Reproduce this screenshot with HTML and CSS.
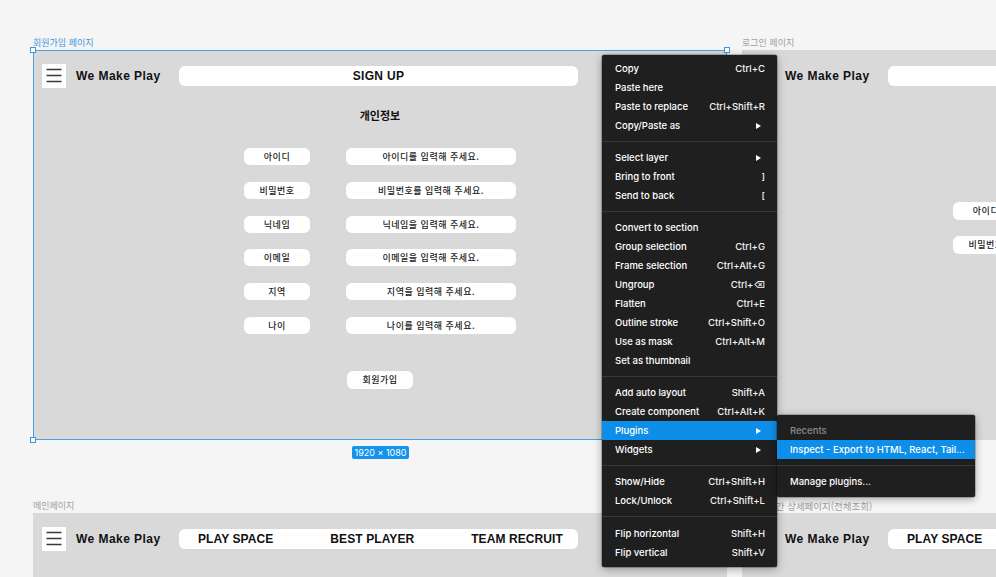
FILE: index.html
```html
<!DOCTYPE html>
<html lang="ko">
<head>
<meta charset="utf-8">
<title>Figma canvas</title>
<link rel="stylesheet" href="styles.css">
</head>
<body>
<div class="canvas">

  <!-- Frame 1: 회원가입 페이지 (selected) -->
  <div class="frame-label label-selected pos-signup-label">회원가입 페이지</div>
  <section class="frame pos-signup">
    <header class="frame-header">
      <span class="hamburger"><svg width="24" height="24" viewBox="0 0 24 24"><path d="M4.5 5.5H19.5M4.5 11.5H19.5M4.5 17.5H19.5" stroke="#3a3a3a" stroke-width="1.5" fill="none"/></svg></span>
      <span class="logo">We Make Play</span>
      <div class="nav-bar nav-center">SIGN UP</div>
    </header>
    <h2 class="form-title">개인정보</h2>
    <div class="form-grid">
      <div class="pill">아이디</div><div class="pill">아이디를 입력해 주세요.</div>
      <div class="pill">비밀번호</div><div class="pill">비밀번호를 입력해 주세요.</div>
      <div class="pill">닉네임</div><div class="pill">닉네임을 입력해 주세요.</div>
      <div class="pill">이메일</div><div class="pill">이메일을 입력해 주세요.</div>
      <div class="pill">지역</div><div class="pill">지역을 입력해 주세요.</div>
      <div class="pill">나이</div><div class="pill">나이를 입력해 주세요.</div>
    </div>
    <div class="pill submit-pill">회원가입</div>
    <div class="selection-box">
      <span class="handle h-tl"></span>
      <span class="handle h-tr"></span>
      <span class="handle h-bl"></span>
      <span class="handle h-br"></span>
    </div>
  </section>
  <div class="size-badge">1920 × 1080</div>

  <!-- Frame 2: 로그인 페이지 -->
  <div class="frame-label pos-login-label">로그인 페이지</div>
  <section class="frame pos-login">
    <header class="frame-header">
      <span class="hamburger"><svg width="24" height="24" viewBox="0 0 24 24"><path d="M4.5 5.5H19.5M4.5 11.5H19.5M4.5 17.5H19.5" stroke="#3a3a3a" stroke-width="1.5" fill="none"/></svg></span>
      <span class="logo">We Make Play</span>
      <div class="nav-bar nav-center">LOGIN</div>
    </header>
    <div class="login-grid">
      <div class="pill">아이디</div><div class="pill">아이디를 입력해 주세요.</div>
      <div class="pill">비밀번호</div><div class="pill">비밀번호를 입력해 주세요.</div>
    </div>
  </section>

  <!-- Frame 3: 메인페이지 -->
  <div class="frame-label pos-main-label">메인페이지</div>
  <section class="frame pos-main">
    <header class="frame-header">
      <span class="hamburger"><svg width="24" height="24" viewBox="0 0 24 24"><path d="M4.5 5.5H19.5M4.5 11.5H19.5M4.5 17.5H19.5" stroke="#3a3a3a" stroke-width="1.5" fill="none"/></svg></span>
      <span class="logo">We Make Play</span>
      <nav class="nav-bar nav-spread">
        <span>PLAY SPACE</span>
        <span>BEST PLAYER</span>
        <span>TEAM RECRUIT</span>
      </nav>
    </header>
  </section>

  <!-- Frame 4: 상세페이지 -->
  <div class="frame-label pos-detail-label">기간 상세페이지(전체조회)</div>
  <section class="frame pos-detail">
    <header class="frame-header">
      <span class="hamburger"><svg width="24" height="24" viewBox="0 0 24 24"><path d="M4.5 5.5H19.5M4.5 11.5H19.5M4.5 17.5H19.5" stroke="#3a3a3a" stroke-width="1.5" fill="none"/></svg></span>
      <span class="logo">We Make Play</span>
      <nav class="nav-bar nav-spread">
        <span>PLAY SPACE</span>
        <span>BEST PLAYER</span>
        <span>TEAM RECRUIT</span>
      </nav>
    </header>
  </section>

  <!-- Context menu -->
  <div class="ctx-menu">
    <div class="mi"><span>Copy</span><span class="sc">Ctrl+C</span></div>
    <div class="mi"><span>Paste here</span></div>
    <div class="mi"><span>Paste to replace</span><span class="sc">Ctrl+Shift+R</span></div>
    <div class="mi"><span>Copy/Paste as</span><span class="arrow"></span></div>
    <div class="sep"></div>
    <div class="mi"><span>Select layer</span><span class="arrow"></span></div>
    <div class="mi"><span>Bring to front</span><span class="sc">]</span></div>
    <div class="mi"><span>Send to back</span><span class="sc">[</span></div>
    <div class="sep"></div>
    <div class="mi"><span>Convert to section</span></div>
    <div class="mi"><span>Group selection</span><span class="sc">Ctrl+G</span></div>
    <div class="mi"><span>Frame selection</span><span class="sc">Ctrl+Alt+G</span></div>
    <div class="mi"><span>Ungroup</span><span class="sc">Ctrl+⌫</span></div>
    <div class="mi"><span>Flatten</span><span class="sc">Ctrl+E</span></div>
    <div class="mi"><span>Outline stroke</span><span class="sc">Ctrl+Shift+O</span></div>
    <div class="mi"><span>Use as mask</span><span class="sc">Ctrl+Alt+M</span></div>
    <div class="mi"><span>Set as thumbnail</span></div>
    <div class="sep"></div>
    <div class="mi"><span>Add auto layout</span><span class="sc">Shift+A</span></div>
    <div class="mi"><span>Create component</span><span class="sc">Ctrl+Alt+K</span></div>
    <div class="mi mi-active"><span>Plugins</span><span class="arrow"></span></div>
    <div class="mi"><span>Widgets</span><span class="arrow"></span></div>
    <div class="sep"></div>
    <div class="mi"><span>Show/Hide</span><span class="sc">Ctrl+Shift+H</span></div>
    <div class="mi"><span>Lock/Unlock</span><span class="sc">Ctrl+Shift+L</span></div>
    <div class="sep sep-wide"></div>
    <div class="mi"><span>Flip horizontal</span><span class="sc">Shift+H</span></div>
    <div class="mi"><span>Flip vertical</span><span class="sc">Shift+V</span></div>
  </div>

  <!-- Plugins submenu -->
  <div class="ctx-menu sub-menu">
    <div class="mi mi-muted"><span>Recents</span></div>
    <div class="mi mi-active"><span>Inspect - Export to HTML, React, Tail...</span></div>
    <div class="sep"></div>
    <div class="mi"><span>Manage plugins...</span></div>
  </div>

</div>
</body>
</html>
```

FILE: styles.css
```css
* { box-sizing: border-box; margin: 0; padding: 0; }

html, body {
  width: 996px;
  height: 577px;
  overflow: hidden;
  background: #f5f5f5;
}

.canvas {
  position: relative;
  width: 996px;
  height: 577px;
  overflow: hidden;
  background: #f5f5f5;
  font-family: "Liberation Sans", Arial, sans-serif;
}

/* ---------- frame labels on the canvas ---------- */
.frame-label {
  position: absolute;
  font-family: "Noto Sans CJK KR", "Noto Sans", sans-serif;
  font-size: 9px;
  line-height: 12px;
  color: #a0a0a0;
  white-space: nowrap;
}
.label-selected { color: #3f95df; }
.pos-signup-label { left: 33px; top: 37px; }
.pos-login-label { left: 742px; top: 37px; }
.pos-main-label { left: 33px; top: 500px; }
.pos-detail-label { left: 767px; top: 500px; font-size: 9.5px; }

/* ---------- frames ---------- */
.frame {
  position: absolute;
  background: #d9d9d9;
  width: 694px;
  height: 390px;
  display: flex;
  flex-direction: column;
}
.pos-signup { left: 33px; top: 50px; }
.pos-login { left: 742px; top: 50px; }
.pos-main { left: 33px; top: 513px; height: 200px; }
.pos-detail { left: 742px; top: 513px; height: 200px; }

.frame-header {
  display: flex;
  align-items: center;
  height: 24px;
  margin-top: 14px;
  padding-left: 9px;
}

.hamburger {
  width: 24px;
  height: 24px;
  background: #fff;
  display: flex;
  margin-right: 10px;
  flex: none;
}
.hamburger svg { display: block; }

.logo {
  width: 103px;
  flex: none;
  font-weight: bold;
  font-size: 12px;
  letter-spacing: 0.45px;
  color: #111;
  white-space: nowrap;
}

.nav-bar {
  width: 399px;
  height: 20px;
  flex: none;
  background: #fff;
  border-radius: 6px;
  font-weight: bold;
  font-size: 12px;
  color: #111;
  display: flex;
  align-items: center;
  white-space: nowrap;
}
.nav-center { justify-content: center; letter-spacing: 0.3px; }
.nav-spread { justify-content: space-between; padding: 0 15px 0 19px; letter-spacing: 0.1px; }

/* ---------- sign-up form ---------- */
.form-title {
  margin-top: 18px;
  text-align: center;
  font-family: "Noto Sans CJK KR", sans-serif;
  font-size: 11px;
  line-height: 19px;
  font-weight: bold;
  color: #111;
}

.form-grid {
  margin-top: 23px;
  display: grid;
  grid-template-columns: 66px 170px;
  grid-auto-rows: 17px;
  column-gap: 36px;
  row-gap: 16.8px;
  justify-content: center;
}

.pill {
  background: #fff;
  border-radius: 6px;
  font-family: "Noto Sans CJK KR", sans-serif;
  font-size: 9px;
  font-weight: 500;
  letter-spacing: 0.5px;
  line-height: 17px;
  color: #222;
  text-align: center;
  white-space: nowrap;
}

.submit-pill {
  width: 66px;
  height: 18px;
  line-height: 18px;
  margin: 37px auto 0;
}

.login-grid {
  margin-top: 114px;
  margin-left: 211px;
  display: grid;
  grid-template-columns: 66px 170px;
  grid-auto-rows: 18px;
  column-gap: 36px;
  row-gap: 16px;
}
.login-grid .pill { line-height: 18px; }

/* ---------- selection ---------- */
.selection-box {
  position: absolute;
  inset: 0;
  border: 1px solid #4a9fe6;
  pointer-events: none;
}
.handle {
  position: absolute;
  width: 6px;
  height: 6px;
  background: #fff;
  border: 1px solid #3f95df;
}
.h-tl { left: -4px; top: -4px; }
.h-tr { right: -4px; top: -4px; }
.h-bl { left: -4px; bottom: -4px; }
.h-br { right: -4px; bottom: -4px; }

.size-badge {
  position: absolute;
  left: 352px;
  top: 446px;
  width: 57px;
  height: 13px;
  background: #1592ec;
  border-radius: 2px;
  color: #fff;
  font-family: Inter, "Noto Sans", sans-serif;
  font-size: 9px;
  line-height: 13px;
  text-align: center;
  white-space: nowrap;
}

/* ---------- context menu ---------- */
.ctx-menu {
  position: absolute;
  left: 602px;
  top: 55px;
  width: 175px;
  padding: 4px 0 5px;
  background: #1f1f1f;
  border-radius: 2px;
  box-shadow: 0 2px 8px rgba(0, 0, 0, 0.35), 0 0 0 0.5px rgba(0, 0, 0, 0.4);
  font-family: Inter, "Noto Sans", sans-serif;
  font-size: 9.5px;
  font-weight: 500;
  color: #fff;
}

.mi {
  height: 19px;
  display: flex;
  align-items: center;
  justify-content: space-between;
  padding: 0 12px 0 13px;
  white-space: nowrap;
}
.mi-active { background: #0d8fe9; }
.mi-muted { color: #8c8c8c; }

.sc { color: #f2f2f2; }

.arrow {
  width: 0;
  height: 0;
  border-left: 5px solid #fff;
  border-top: 3px solid transparent;
  border-bottom: 3px solid transparent;
  margin-right: 4px;
}

.sep {
  height: 1px;
  margin: 6px 0;
  background: #383838;
}
.sep-wide { margin-bottom: 7px; }

.sub-menu {
  left: 777px;
  top: 415px;
  width: 198px;
  padding: 6px 0 6px;
}
```
